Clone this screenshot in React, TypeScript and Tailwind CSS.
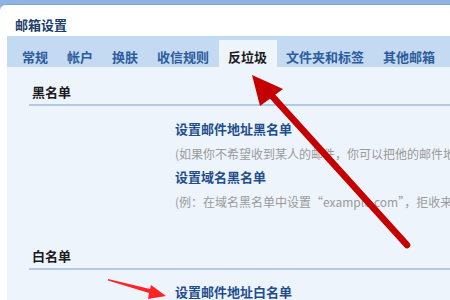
const font = { fontFamily: '"Noto Sans CJK SC", "Noto Sans", sans-serif' }

const tabs = ['常规', '帐户', '换肤', '收信规则', '反垃圾', '文件夹和标签', '其他邮箱']

function SectionTitle({ label }: { label: string }) {
  return (
    <div>
      <div className="pl-[3px] text-[13px] leading-[16px] font-bold text-[#1a1a1a]">{label}</div>
      <div className="mt-[4px] h-[2px] bg-[#b0cbe9]" />
    </div>
  )
}

export default function App() {
  return (
    <div
      className="relative w-[450px] h-[300px] overflow-hidden bg-[#8fb3e2] pt-[4px]"
      style={font}
    >
      <div className="flex h-full flex-col rounded-tl-[6px] border-t border-[#7fa4d6] bg-white">
        {/* Title */}
        <div className="pl-[15px] pt-[12px] text-[13px] leading-[16px] font-bold text-[#1d3d6b]">
          邮箱设置
        </div>

        {/* Tabs */}
        <div className="mt-[3px] ml-[7px] flex h-[36px] items-end bg-[#c3daf2] pl-[5.5px]">
          {tabs.map((t) => (
            <div
              key={t}
              className={`flex h-[27px] items-center whitespace-nowrap px-[9.5px] pt-[6px] text-[13px] leading-[16px] font-bold ${
                t === '反垃圾' ? 'bg-[#eef4fc] text-[#1a1a1a]' : 'text-[#2d5c9c]'
              }`}
            >
              {t}
            </div>
          ))}
        </div>

        {/* Content */}
        <div className="ml-[7px] flex-1 bg-[#eef4fc] pl-[22px] pt-[17px]">
          <SectionTitle label="黑名单" />
          <div className="pl-[146px] whitespace-nowrap">
            <div className="mt-[15px] text-[13px] leading-[16px] font-bold text-[#1f4e8c]">
              设置邮件地址黑名单
            </div>
            <div className="mt-[9px] text-[12px] leading-[16px] text-[#9a9a9a]">
              (如果你不希望收到某人的邮件，你可以把他的邮件地址加入黑名单)
            </div>
            <div className="mt-[7px] text-[13px] leading-[16px] font-bold text-[#1f4e8c]">
              设置域名黑名单
            </div>
            <div className="mt-[9px] text-[12px] leading-[16px] text-[#9a9a9a]">
              (例：在域名黑名单中设置“example.com”，拒收来自该域名的邮件)
            </div>
          </div>

          <div className="mt-[38px]">
            <SectionTitle label="白名单" />
          </div>
          <div className="pl-[146px] whitespace-nowrap">
            <div className="mt-[14px] text-[13px] leading-[16px] font-bold text-[#1f4e8c]">
              设置邮件地址白名单
            </div>
          </div>
        </div>
      </div>

      {/* Annotation arrows */}
      <svg className="pointer-events-none absolute inset-0" width="450" height="300" viewBox="0 0 450 300">
        <line x1="272" y1="96" x2="407" y2="245" stroke="#c40000" strokeWidth="6.5" strokeLinecap="round" />
        <polygon points="252,75 283,89 260,106" fill="#c40000" />
        <polygon points="108,279 150,289 151,285 166,296 148,299 149,293 108,280.5" fill="#ff2424" />
      </svg>
    </div>
  )
}
